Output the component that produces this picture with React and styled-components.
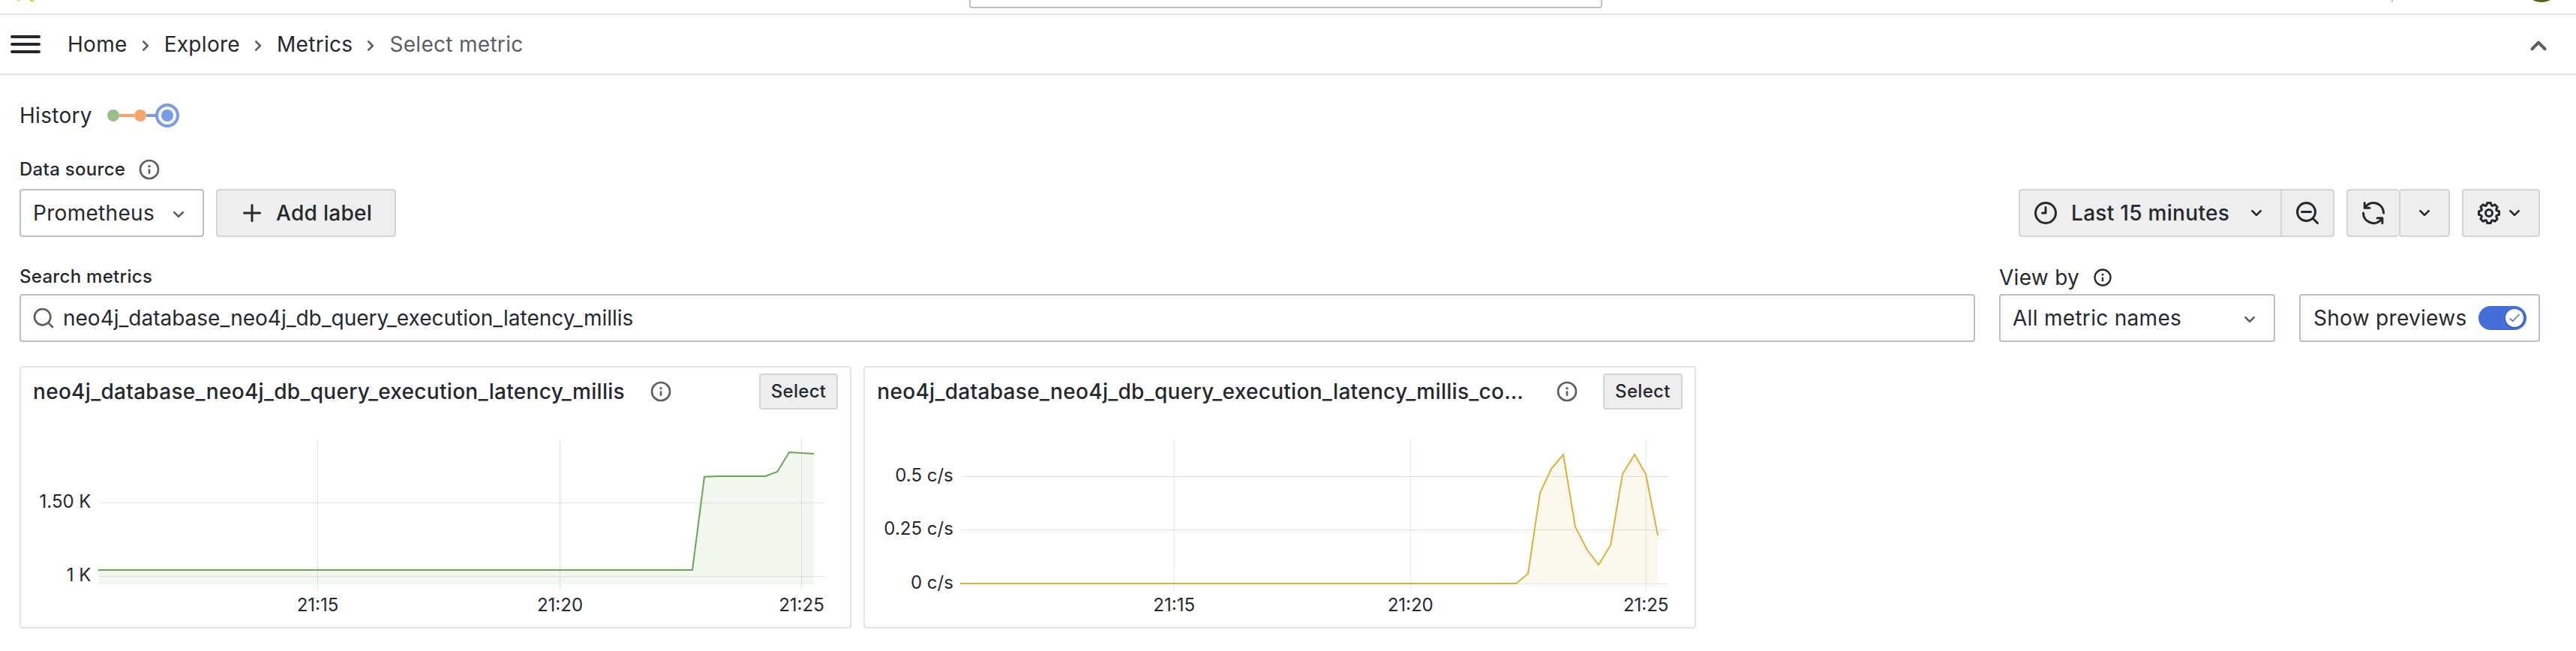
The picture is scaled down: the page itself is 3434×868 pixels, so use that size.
import React from "react";
import styled, { createGlobalStyle } from "styled-components";

const Global = createGlobalStyle`
  * { box-sizing: border-box; }
  body {
    margin: 0;
    background: #fff;
    color: #24292e;
    font-family: Inter, "Liberation Sans", sans-serif;
    font-size: 28px;
    line-height: 44px;
    letter-spacing: 0.3px;
    overflow: hidden;
  }
  button { font: inherit; color: inherit; letter-spacing: inherit; }
`;

const paths = {
  info: "M12,2A10,10,0,1,0,22,12,10,10,0,0,0,12,2Zm0,18a8,8,0,1,1,8-8A8,8,0,0,1,12,20Zm0-8.5a1,1,0,0,0-1,1v3a1,1,0,0,0,2,0v-3A1,1,0,0,0,12,11.5Zm0-4a1.25,1.25,0,1,0,1.25,1.25A1.25,1.25,0,0,0,12,7.5Z",
  clock: "M12,2A10,10,0,1,0,22,12,10,10,0,0,0,12,2Zm0,18a8,8,0,1,1,8-8A8,8,0,0,1,12,20ZM12,6a1,1,0,0,0-1,1v4H9a1,1,0,0,0,0,2h3a1,1,0,0,0,1-1V7A1,1,0,0,0,12,6Z",
  search: "M21.71,20.29,18,16.61A9,9,0,1,0,16.61,18l3.68,3.68a1,1,0,0,0,1.42,0A1,1,0,0,0,21.71,20.29ZM11,18a7,7,0,1,1,7-7A7,7,0,0,1,11,18Z",
  zoomOut: "M21.71,20.29,18,16.61A9,9,0,1,0,16.61,18l3.68,3.68a1,1,0,0,0,1.42,0A1,1,0,0,0,21.71,20.29ZM11,18a7,7,0,1,1,7-7A7,7,0,0,1,11,18Zm4-8H7a1,1,0,0,0,0,2h8a1,1,0,0,0,0-2Z",
  down: "M17,9.17a1,1,0,0,0-1.41,0L12,12.71,8.46,9.17a1,1,0,0,0-1.41,0,1,1,0,0,0,0,1.42l4.24,4.24a1,1,0,0,0,1.42,0L17,10.59A1,1,0,0,0,17,9.17Z",
  up: "M17,13.41,12.71,9.17a1,1,0,0,0-1.42,0L7.05,13.41a1,1,0,0,0,0,1.42,1,1,0,0,0,1.41,0L12,11.29l3.54,3.54a1,1,0,0,0,.7.29,1,1,0,0,0,.71-.29A1,1,0,0,0,17,13.41Z",
  right: "M14.83,11.29,10.59,7.05a1,1,0,0,0-1.42,0,1,1,0,0,0,0,1.41L12.71,12,9.17,15.54a1,1,0,0,0,0,1.41,1,1,0,0,0,.71.29,1,1,0,0,0,.71-.29l4.24-4.24A1,1,0,0,0,14.83,11.29Z",
  plus: "M19,11H13V5a1,1,0,0,0-2,0v6H5a1,1,0,0,0,0,2h6v6a1,1,0,0,0,2,0V13h6a1,1,0,0,0,0-2Z",
  sync: "M19.91,15.51H15.38a1,1,0,0,0,0,2h2.4A8,8,0,0,1,4,12a1,1,0,0,0-2,0,10,10,0,0,0,16.88,7.23V21a1,1,0,0,0,2,0V16.5A1,1,0,0,0,19.91,15.51ZM12,2A10,10,0,0,0,5.12,4.77V3a1,1,0,0,0-2,0V7.5a1,1,0,0,0,1,1h4.5a1,1,0,0,0,0-2H6.22A8,8,0,0,1,20,12a1,1,0,0,0,2,0A10,10,0,0,0,12,2Z",
  cog: "M21.32,9.55l-1.89-.63.89-1.78A1,1,0,0,0,20.13,6L18,3.87a1,1,0,0,0-1.15-.19l-1.78.89-.63-1.89A1,1,0,0,0,13.5,2h-3a1,1,0,0,0-.95.68L8.92,4.57,7.14,3.68A1,1,0,0,0,6,3.87L3.87,6a1,1,0,0,0-.19,1.15l.89,1.78-1.89.63A1,1,0,0,0,2,10.5v3a1,1,0,0,0,.68.95l1.89.63-.89,1.78A1,1,0,0,0,3.87,18L6,20.13a1,1,0,0,0,1.15.19l1.78-.89.63,1.89a1,1,0,0,0,.95.68h3a1,1,0,0,0,.95-.68l.63-1.89,1.78.89A1,1,0,0,0,18,20.13L20.13,18a1,1,0,0,0,.19-1.15l-.89-1.78,1.89-.63A1,1,0,0,0,22,13.5v-3A1,1,0,0,0,21.32,9.55ZM20,12.78l-1.2.4A2,2,0,0,0,17.64,16l.57,1.14-1.1,1.1L16,17.64a2,2,0,0,0-2.79,1.16l-.4,1.2H11.22l-.4-1.2A2,2,0,0,0,8,17.64l-1.14.57-1.1-1.1L6.36,16A2,2,0,0,0,5.2,13.18L4,12.78V11.22l1.2-.4A2,2,0,0,0,6.36,8L5.79,6.89l1.1-1.1L8,6.36A2,2,0,0,0,10.82,5.2l.4-1.2h1.56l.4,1.2A2,2,0,0,0,16,6.36l1.14-.57,1.1,1.1L17.64,8a2,2,0,0,0,1.16,2.79l1.2.4ZM12,8a4,4,0,1,0,4,4A4,4,0,0,0,12,8Zm0,6a2,2,0,1,1,2-2A2,2,0,0,1,12,14Z",
};

const Glyph = styled.svg`
  display: block;
  flex: none;
  width: ${(p) => p.$size}px;
  height: ${(p) => p.$size}px;
  margin-top: ${(p) => p.$drop || 0}px;
  fill: ${(p) => (p.$muted ? "#5b5f62" : "#24292e")};
`;
const Icon = ({ name, size = 32, muted, drop }) => (
  <Glyph viewBox="0 0 24 24" $size={size} $muted={muted} $drop={drop}>
    <path d={paths[name]} />
  </Glyph>
);

const TopBar = styled.header`
  display: flex;
  justify-content: space-between;
  align-items: flex-start;
  height: 20px;
  padding: 0 28px 0 22px;
  border-bottom: 2px solid #e4e5e5;
`;
const TopSide = styled.div`
  display: flex;
  flex: 1;
  justify-content: ${(p) => (p.$end ? "flex-end" : "flex-start")};
`;
const TopSearch = styled.div`
  width: 844px;
  height: 11px;
  border: 2px solid #bdbfc0;
  border-top: 0;
  border-radius: 0 0 4px 4px;
`;
const TopDivider = styled.div`
  width: 2px;
  height: 3px;
  margin-right: 186px;
  background: #bdbfc0;
`;
const Strip = styled.svg`
  display: block;
`;

const Nav = styled.nav`
  display: flex;
  align-items: center;
  height: 80px;
  padding: 0 26px 0 14px;
  border-bottom: 2px solid #e4e5e5;
`;
const MenuButton = styled.div`
  display: flex;
  flex-direction: column;
  gap: 6px;
  width: 40px;
  margin-right: 36px;
`;
const MenuBar = styled.span`
  height: 4px;
  border-radius: 2px;
  background: #24292e;
`;
const Crumbs = styled.div`
  display: flex;
  flex: 1;
  align-items: center;
`;
const Crumb = styled.span`
  color: ${(p) => (p.$current ? "#5b5f62" : "#24292e")};
`;
const CrumbSep = styled.span`
  display: flex;
  padding: 4px 9px 0 8px;
`;

const Page = styled.main`
  width: 3360px;
  margin-left: 26px;
`;
const Row = styled.div`
  display: flex;
  align-items: center;
  gap: ${(p) => p.$gap || 0}px;
`;
const History = styled.div`
  display: flex;
  align-items: center;
  gap: 20px;
  padding-top: 32px;
  height: 76px;
`;
const Label = styled.div`
  display: flex;
  align-items: center;
  gap: 16px;
  font-size: 24px;
  font-weight: 500;
  line-height: 32px;
`;
const Toolbar = styled.div`
  display: flex;
  justify-content: space-between;
  align-items: flex-end;
  height: 106px;
  margin-top: 34px;
`;
const Stack = styled.div`
  display: flex;
  flex-direction: column;
  gap: ${(p) => p.$gap}px;
`;
const Box = styled.div`
  display: flex;
  align-items: center;
  justify-content: space-between;
  width: ${(p) => p.$w}px;
  height: 64px;
  padding: ${(p) => p.$pad || "0 16px"};
  border: 2px solid #bdbfc0;
  border-radius: 4px;
  background: #fff;
`;
const Button = styled.button`
  display: flex;
  align-items: center;
  width: ${(p) => p.$w}px;
  height: ${(p) => p.$h || 64}px;
  margin: 0;
  padding: ${(p) => p.$pad || "0 16px"};
  gap: ${(p) => p.$gap || 0}px;
  border: 2px solid #d3d4d5;
  border-right-width: ${(p) => (p.$open ? 0 : 2)}px;
  border-radius: ${(p) => p.$radius || "4px"};
  background: #eeeeee;
  font-weight: 500;
  font-size: ${(p) => p.$font || 28}px;
  white-space: nowrap;
`;
const RangeText = styled.span`
  flex: 1;
  text-align: left;
`;

const SearchRow = styled.div`
  display: flex;
  align-items: flex-end;
  gap: 32px;
  height: 108px;
  margin-top: 32px;
`;
const SearchText = styled.span`
  flex: 1;
  padding-left: 10px;
  letter-spacing: 0;
`;
const ViewBy = styled.div`
  display: flex;
  align-items: center;
  gap: 17px;
  height: 44px;
`;
const Switch = styled.div`
  display: flex;
  justify-content: flex-end;
  align-items: center;
  width: 64px;
  height: 32px;
  padding-right: 4px;
  border-radius: 16px;
  background: #456fd8;
`;
const Knob = styled.div`
  display: flex;
  align-items: center;
  justify-content: center;
  width: 24px;
  height: 24px;
  border-radius: 50%;
  background: #fff;
  box-shadow: 0 1px 2px rgba(0, 0, 0, 0.3);
`;

const Grid = styled.div`
  display: grid;
  grid-template-columns: repeat(3, 1fr);
  gap: 16px;
  margin-top: 32px;
`;
const Card = styled.section`
  height: 350px;
  border: 2px solid #e4e5e5;
  border-radius: 4px;
`;
const CardHead = styled.div`
  display: flex;
  align-items: center;
  height: 64px;
  padding: 0 16px;
`;
const CardTitle = styled.h2`
  margin: 0;
  font-size: 28px;
  font-weight: 500;
  line-height: 44px;
  white-space: nowrap;
`;
const InfoSlot = styled.div`
  display: flex;
  flex: 1;
  justify-content: ${(p) => (p.$end ? "flex-end" : "flex-start")};
  padding: ${(p) => (p.$end ? "0 32px 0 0" : "0 0 0 32px")};
`;
const Plot = styled.svg`
  display: block;
  font-size: 24px;
  letter-spacing: 0;
  fill: #24292e;
`;

/* Coordinates are relative to the plot's own top-left corner, below the card header. */
const charts = [
  {
    title: "neo4j_database_neo4j_db_query_execution_latency_millis",
    stroke: "#6aa556",
    fill: "#f2f7ef",
    x: [395.5, 718.5, 1040.5],
    y: [[116.5, "1.50 K"], [214.5, "1 K"]],
    left: 104.5,
    labelRight: 93.5,
    right: 1072.5,
    base: 225,
    pts: [[103, 206], [895, 206], [911, 81.7], [928, 81], [992, 81], [1008.3, 75], [1024, 49], [1057, 51]],
  },
  {
    title: "neo4j_database_neo4j_db_query_execution_latency_millis_co…",
    truncated: true,
    stroke: "#dbb13c",
    fill: "#fbf9ed",
    x: [412.2, 727.2, 1041.2],
    y: [[81.5, "0.5 c/s"], [152.5, "0.25 c/s"], [224.5, "0 c/s"]],
    left: 128.3,
    labelRight: 117.8,
    right: 1072,
    base: 224,
    pts: [[126.8, 224], [868, 224], [884, 211], [900, 103], [915.3, 70.5], [931, 52], [947, 148.5], [963, 179.5], [978, 199], [994, 173], [1010, 78], [1026, 52], [1041, 78.5], [1057, 160]],
  },
];

function Chart({ c }) {
  const line = c.pts.map((p) => p.join(",")).join(" ");
  const last = c.pts[c.pts.length - 1][0];
  return (
    <Plot width="1100" height="280">
      <polygon points={`${line} ${last},${c.base} ${c.pts[0][0]},${c.base}`} fill={c.fill} />
      <g stroke="#24292e" strokeOpacity="0.12">
        {c.x.map((x) => <line key={x} x1={x} x2={x} y1="32" y2="232.5" />)}
        {c.y.map(([y]) => <line key={y} x1={c.left} x2={c.right} y1={y} y2={y} />)}
      </g>
      <polyline points={line} fill="none" stroke={c.stroke} strokeWidth="2" />
      {c.y.map(([y, t]) => <text key={t} x={c.labelRight} y={y + 6.5} textAnchor="end">{t}</text>)}
      {c.x.map((x, i) => <text key={x} x={x} y="261" textAnchor="middle">{["21:15", "21:20", "21:25"][i]}</text>)}
    </Plot>
  );
}

const crumbs = ["Home", "Explore", "Metrics"];

export default function App() {
  return (
    <>
      <Global />
      <TopBar>
        <TopSide>
          <Strip width="26" height="4">
            <path d="M1 0H5.5L4.5 1H1.5Z M17 0H23.5L22 2L20.5 3L19 2Z" fill="#f5c145" />
          </Strip>
        </TopSide>
        <TopSearch />
        <TopSide $end>
          <TopDivider />
          <Strip width="30" height="4">
            <circle cx="12" cy="-21" r="24" fill="#50641a" />
          </Strip>
        </TopSide>
      </TopBar>
      <Nav>
        <MenuButton><MenuBar /><MenuBar /><MenuBar /></MenuButton>
        <Crumbs>
          {crumbs.map((c) => (
            <React.Fragment key={c}>
              <Crumb>{c}</Crumb>
              <CrumbSep><Icon name="right" muted /></CrumbSep>
            </React.Fragment>
          ))}
          <Crumb $current>Select metric</Crumb>
        </Crumbs>
        <Icon name="up" size={48} drop={4} muted />
      </Nav>
      <Page>
        <History>
          <span>History</span>
          <svg width="98" height="32">
            <path d="M16 16H36" stroke="#f4a56d" strokeWidth="4" />
            <path d="M52 16H66" stroke="#7d9be3" strokeWidth="4" />
            <circle cx="8" cy="16" r="8" fill="#96bf89" />
            <circle cx="44" cy="16" r="8" fill="#f4a56d" />
            <circle cx="80" cy="16" r="14" fill="#f4f5f5" stroke="#7d9be3" strokeWidth="4" />
            <circle cx="80" cy="16" r="8" fill="#7d9be3" />
          </svg>
        </History>
        <Toolbar>
          <Stack $gap={10}>
            <Label>Data source <Icon name="info" muted /></Label>
            <Row $gap={16}>
              <Box $w={246}>Prometheus <Icon name="down" drop={4} muted /></Box>
              <Button $w={240} $pad="0 28px" $gap={14}><Icon name="plus" size={36} />Add label</Button>
            </Row>
          </Stack>
          <Row $gap={16}>
            <Row>
              <Button $w={349} $gap={16} $open $radius="4px 0 0 4px">
                <Icon name="clock" size={36} />
                <RangeText>Last 15 minutes</RangeText>
                <Icon name="down" />
              </Button>
              <Button $w={72} $radius="0 4px 4px 0"><Icon name="zoomOut" size={36} /></Button>
            </Row>
            <Row>
              <Button $w={70} $open><Icon name="sync" size={36} /></Button>
              <Button $w={68}><Icon name="down" /></Button>
            </Row>
            <Button $w={104}><Icon name="cog" size={36} /><Icon name="down" /></Button>
          </Row>
        </Toolbar>
        <SearchRow>
          <Stack $gap={7}>
            <Label>Search metrics</Label>
            <Box $w={2607} $pad="0 14px"><Icon name="search" muted /><SearchText>neo4j_database_neo4j_db_query_execution_latency_millis</SearchText></Box>
          </Stack>
          <Stack $gap={0}>
            <ViewBy>View by <Icon name="info" size={28} /></ViewBy>
            <Box $w={368}>All metric names <Icon name="down" drop={4} muted /></Box>
          </Stack>
          <Box $w={321} $pad="0 16px 0 17px">
            Show previews
            <Switch>
              <Knob>
                <svg width="16" height="12" viewBox="0 0 16 12">
                  <path d="M2 6.8L5.6 10.3L14 1.7" fill="none" stroke="#456fd8" strokeWidth="1.6" strokeLinecap="round" strokeLinejoin="round" />
                </svg>
              </Knob>
            </Switch>
          </Box>
        </SearchRow>
        <Grid>
          {charts.map((c) => (
            <Card key={c.title}>
              <CardHead>
                <CardTitle>{c.title}</CardTitle>
                <InfoSlot $end={c.truncated}><Icon name="info" muted /></InfoSlot>
                <Button $h={48} $font={24} $pad="0 14px">Select</Button>
              </CardHead>
              <Chart c={c} />
            </Card>
          ))}
        </Grid>
      </Page>
    </>
  );
}
